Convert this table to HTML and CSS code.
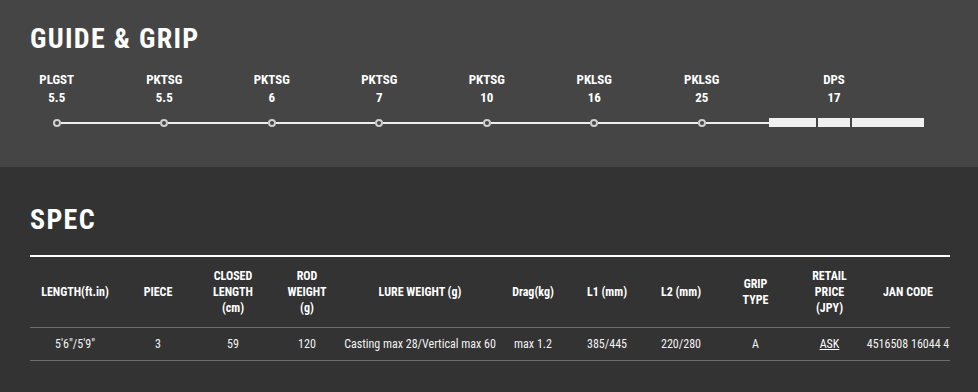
FILE: index.html
```html
<!DOCTYPE html>
<html lang="en">
<head>
<meta charset="utf-8">
<title>Guide &amp; Grip / Spec</title>
<link rel="stylesheet" href="styles.css">
</head>
<body>
  <section class="guide-section">
    <h2 class="heading">GUIDE &amp; GRIP</h2>
    <div class="guide-grid">
      <div class="guide"><span class="g-name">PLGST</span><span class="g-size">5.5</span><div class="track"><span class="ring"></span></div></div>
      <div class="guide"><span class="g-name">PKTSG</span><span class="g-size">5.5</span><div class="track"><span class="ring"></span></div></div>
      <div class="guide"><span class="g-name">PKTSG</span><span class="g-size">6</span><div class="track"><span class="ring"></span></div></div>
      <div class="guide"><span class="g-name">PKTSG</span><span class="g-size">7</span><div class="track"><span class="ring"></span></div></div>
      <div class="guide"><span class="g-name">PKTSG</span><span class="g-size">10</span><div class="track"><span class="ring"></span></div></div>
      <div class="guide"><span class="g-name">PKLSG</span><span class="g-size">16</span><div class="track"><span class="ring"></span></div></div>
      <div class="guide"><span class="g-name">PKLSG</span><span class="g-size">25</span><div class="track"><span class="ring"></span></div></div>
      <div class="grip">
        <span class="g-name">DPS</span><span class="g-size">17</span>
        <div class="grip-track">
          <span class="lead"></span>
          <span class="bar bar-a"></span>
          <span class="bar bar-b"></span>
          <span class="bar bar-c"></span>
        </div>
      </div>
    </div>
  </section>

  <section class="spec-section">
    <h2 class="heading">SPEC</h2>
    <table class="spec">
      <colgroup>
        <col class="w90"><col class="w76"><col class="w74"><col class="w74"><col class="w152"><col class="w74"><col class="w74"><col class="w74"><col class="w75"><col class="w73"><col class="w84">
      </colgroup>
      <thead>
        <tr>
          <th>LENGTH(ft.in)</th>
          <th>PIECE</th>
          <th>CLOSED<br>LENGTH<br>(cm)</th>
          <th>ROD<br>WEIGHT<br>(g)</th>
          <th>LURE WEIGHT (g)</th>
          <th>Drag(kg)</th>
          <th>L1 (mm)</th>
          <th>L2 (mm)</th>
          <th>GRIP<br>TYPE</th>
          <th>RETAIL<br>PRICE<br>(JPY)</th>
          <th>JAN CODE</th>
        </tr>
      </thead>
      <tbody>
        <tr>
          <td>5'6"/5'9"</td>
          <td>3</td>
          <td>59</td>
          <td>120</td>
          <td>Casting max 28/Vertical max 60</td>
          <td>max 1.2</td>
          <td>385/445</td>
          <td>220/280</td>
          <td>A</td>
          <td><a class="ask" href="#">ASK</a></td>
          <td>4516508 16044 4</td>
        </tr>
      </tbody>
    </table>
  </section>
</body>
</html>
```
FILE: styles.css
```css
html, body {
  margin: 0;
  padding: 0;
}

body {
  background: #333333;
  color: #ffffff;
  font-family: "Roboto Condensed", "Liberation Sans Narrow", "DejaVu Sans Condensed", Roboto, sans-serif;
  width: 978px;
  height: 392px;
  overflow: hidden;
}

.heading {
  margin: 0 0 0 30px;
  font-size: 28px;
  line-height: 34px;
  font-weight: 700;
  letter-spacing: 1.3px;
}

/* guide & grip block */
.guide-section {
  background: #454545;
  height: 167px;
  box-sizing: border-box;
  padding-top: 22px;
}

.guide-grid {
  display: grid;
  grid-template-columns: repeat(7, 107.5px) 169px;
  margin: 15px 0 0 3px;
}

.guide,
.grip {
  display: flex;
  flex-direction: column;
}

.g-name,
.g-size {
  font-size: 13px;
  line-height: 18px;
  font-weight: 700;
  text-align: center;
}

.grip .g-name,
.grip .g-size {
  padding-right: 12px;
}

.track {
  display: flex;
  align-items: center;
  height: 9px;
  margin-top: 11px;
}

.track::before,
.track::after {
  content: "";
  flex: 1;
  height: 2px;
  background: #eeeeee;
}

.guide:first-child .track::before {
  visibility: hidden;
}

.ring {
  width: 8px;
  height: 8px;
  box-sizing: border-box;
  border: 2px solid #cfcfcf;
  border-radius: 50%;
  background: #454545;
}

.grip-track {
  display: flex;
  align-items: center;
  gap: 2px;
  height: 9px;
  margin-top: 11px;
}

.lead {
  width: 13.5px;
  height: 2px;
  margin-right: -2px;
  background: #eeeeee;
}

.bar {
  height: 9px;
  background: #f0f0f0;
}

.bar-a { width: 47px; }
.bar-b { width: 32px; }
.bar-c { width: 72px; }

/* spec table */
.spec-section {
  padding-top: 36px;
}

.spec-section .heading {
  margin-bottom: 18px;
}

.spec {
  margin-left: 30px;
  width: 920px;
  table-layout: fixed;
  border-collapse: collapse;
  border-top: 2px solid #ffffff;
}

.w90 { width: 90px; }
.w76 { width: 76px; }
.w74 { width: 74px; }
.w152 { width: 152px; }
.w75 { width: 75px; }
.w73 { width: 73px; }
.w84 { width: 84px; }

.spec th,
.spec td {
  padding: 0;
  text-align: center;
  vertical-align: middle;
  white-space: nowrap;
  font-size: 12px;
  border-bottom: 1px solid #6e6e6e;
}

.spec th {
  height: 70px;
  line-height: 16px;
  font-weight: 700;
}

.spec td {
  height: 32px;
  font-weight: 400;
  color: #f2f2f2;
}

.ask {
  color: #ffffff;
  text-decoration: underline;
}
```
